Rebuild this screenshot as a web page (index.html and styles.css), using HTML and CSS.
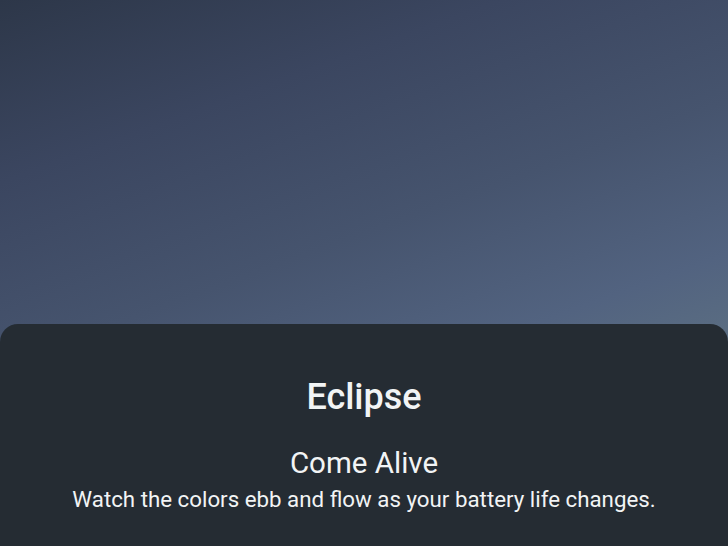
FILE: index.html
```html
<!DOCTYPE html>
<html>
<head>
<meta charset="utf-8">
<link rel="stylesheet" href="styles.css">
</head>
<body>
<div class="screen">
  <div class="wallpaper"></div>
  <div class="sheet">
    <h1 class="title">Eclipse</h1>
    <h2 class="subtitle">Come Alive</h2>
    <p class="desc">Watch the colors ebb and flow as your battery life changes.</p>
  </div>
</div>
</body>
</html>
```

FILE: styles.css
```css
html, body {
  margin: 0;
  padding: 0;
  width: 728px;
  height: 546px;
  overflow: hidden;
}
body {
  font-family: Roboto, "Liberation Sans", sans-serif;
}
.screen {
  width: 728px;
  height: 546px;
  display: flex;
  flex-direction: column;
  background-color: #55677e;
  background-image: linear-gradient(160deg, #2d3749 0%, #3b4660 30%, #46546e 60%, #526380 85%, #5b6e82 100%);
  background-size: 728px 345px;
  background-repeat: no-repeat;
}
.wallpaper {
  flex: 1;
}
.sheet {
  height: 222px;
  background: #252c33;
  border-radius: 18px 18px 0 0;
  display: flex;
  flex-direction: column;
  align-items: center;
  color: #f2f4f5;
  padding-top: 51px;
  box-sizing: border-box;
}
.title {
  margin: 0;
  font-size: 36px;
  font-weight: 500;
  line-height: 44px;
}
.subtitle {
  margin: 27px 0 0 0;
  font-size: 29.5px;
  font-weight: 400;
  line-height: 34px;
}
.desc {
  margin: 4px 0 0 0;
  font-size: 22.3px;
  line-height: 30px;
}
```
